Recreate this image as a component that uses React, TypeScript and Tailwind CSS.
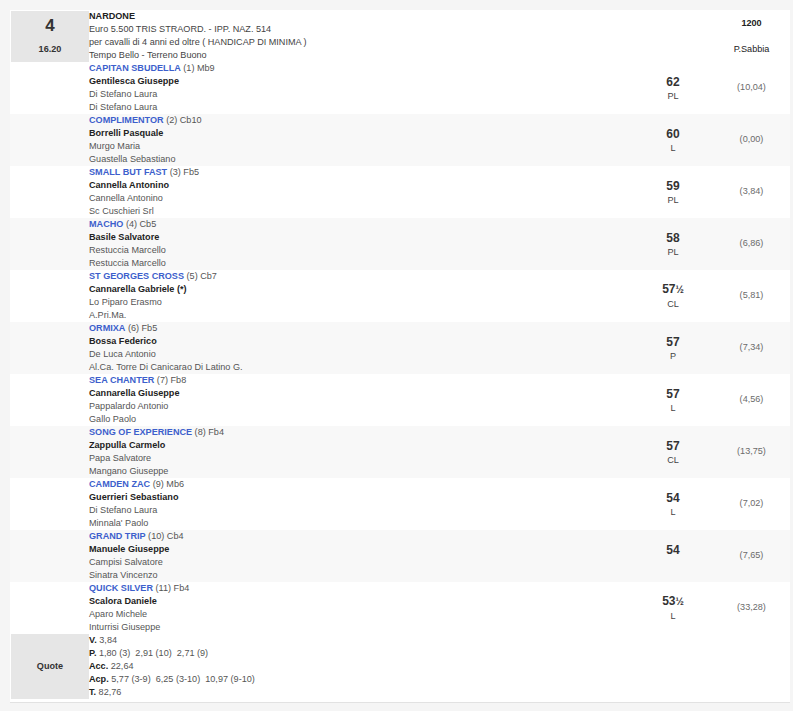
import React from 'react';

type Horse = {
  name: string;
  num: number;
  box: string;
  jockey: string;
  trainer: string;
  owner: string;
  weight: string;
  half?: boolean;
  note: string;
  odds: string;
};

const horses: Horse[] = [
  { name: 'CAPITAN SBUDELLA', num: 1, box: 'Mb9', jockey: 'Gentilesca Giuseppe', trainer: 'Di Stefano Laura', owner: 'Di Stefano Laura', weight: '62', note: 'PL', odds: '(10,04)' },
  { name: 'COMPLIMENTOR', num: 2, box: 'Cb10', jockey: 'Borrelli Pasquale', trainer: 'Murgo Maria', owner: 'Guastella Sebastiano', weight: '60', note: 'L', odds: '(0,00)' },
  { name: 'SMALL BUT FAST', num: 3, box: 'Fb5', jockey: 'Cannella Antonino', trainer: 'Cannella Antonino', owner: 'Sc Cuschieri Srl', weight: '59', note: 'PL', odds: '(3,84)' },
  { name: 'MACHO', num: 4, box: 'Cb5', jockey: 'Basile Salvatore', trainer: 'Restuccia Marcello', owner: 'Restuccia Marcello', weight: '58', note: 'PL', odds: '(6,86)' },
  { name: 'ST GEORGES CROSS', num: 5, box: 'Cb7', jockey: 'Cannarella Gabriele (*)', trainer: 'Lo Piparo Erasmo', owner: 'A.Pri.Ma.', weight: '57', half: true, note: 'CL', odds: '(5,81)' },
  { name: 'ORMIXA', num: 6, box: 'Fb5', jockey: 'Bossa Federico', trainer: 'De Luca Antonio', owner: 'Al.Ca. Torre Di Canicarao Di Latino G.', weight: '57', note: 'P', odds: '(7,34)' },
  { name: 'SEA CHANTER', num: 7, box: 'Fb8', jockey: 'Cannarella Giuseppe', trainer: 'Pappalardo Antonio', owner: 'Gallo Paolo', weight: '57', note: 'L', odds: '(4,56)' },
  { name: 'SONG OF EXPERIENCE', num: 8, box: 'Fb4', jockey: 'Zappulla Carmelo', trainer: 'Papa Salvatore', owner: 'Mangano Giuseppe', weight: '57', note: 'CL', odds: '(13,75)' },
  { name: 'CAMDEN ZAC', num: 9, box: 'Mb6', jockey: 'Guerrieri Sebastiano', trainer: 'Di Stefano Laura', owner: "Minnala' Paolo", weight: '54', note: 'L', odds: '(7,02)' },
  { name: 'GRAND TRIP', num: 10, box: 'Cb4', jockey: 'Manuele Giuseppe', trainer: 'Campisi Salvatore', owner: 'Sinatra Vincenzo', weight: '54', note: '', odds: '(7,65)' },
  { name: 'QUICK SILVER', num: 11, box: 'Fb4', jockey: 'Scalora Daniele', trainer: 'Aparo Michele', owner: 'Inturrisi Giuseppe', weight: '53', half: true, note: 'L', odds: '(33,28)' },
];

function HorseRow({ horse, index }: { horse: Horse; index: number }) {
  const bg = index % 2 === 0 ? 'bg-white' : 'bg-[#f8f8f8]';
  return (
    <div className={`flex h-[52px] ${bg}`}>
      <div className="w-[79px] shrink-0" />
      <div className="flex-1 leading-[13px]">
        <div>
          <span className="font-bold text-[#3d5fcc]">{horse.name}</span>
          <span className="text-[#555]"> ({horse.num}) {horse.box}</span>
        </div>
        <div className="font-bold text-[#222]">{horse.jockey}</div>
        <div className="text-[#555]">{horse.trainer}</div>
        <div className="text-[#555]">{horse.owner}</div>
      </div>
      <div className="flex w-[80px] shrink-0 flex-col items-center justify-center">
        <div className="text-[12px] font-bold leading-[16px] text-[#333]">
          {horse.weight}
          {horse.half && <span className="text-[10px]">½</span>}
        </div>
        <div className="leading-[13px] text-[#444]">{horse.note || '\u00a0'}</div>
      </div>
      <div className="flex w-[77px] shrink-0 items-center justify-center text-[#6b6b6b]">
        {horse.odds}
      </div>
    </div>
  );
}

export default function App(): React.JSX.Element {
  return (
    <div
      className="min-h-[711px] bg-[#f5f5f5] pt-[10px] text-[9.1px] text-[#333]"
      style={{ fontFamily: '"Liberation Sans", Arial, sans-serif' }}
    >
      <div className="mx-[10px] w-[780px] border-b border-[#e2e2e2] bg-white pb-[3px]">
        <div className="flex h-[52px]">
          <div className="ml-px mt-px flex w-[78px] shrink-0 flex-col items-center bg-[#e6e6e6]">
            <div className="mt-[5px] text-[17px] font-bold leading-[20px] text-[#333]">4</div>
            <div className="mt-[7px] font-bold leading-[13px]">16.20</div>
          </div>
          <div className="flex-1 leading-[13px]">
            <div className="font-bold text-[#222]">NARDONE</div>
            <div className="text-[#444]">Euro 5.500 TRIS STRAORD. - IPP. NAZ. 514</div>
            <div className="text-[#444]">per cavalli di 4 anni ed oltre ( HANDICAP DI MINIMA )</div>
            <div className="text-[#444]">Tempo Bello - Terreno Buono</div>
          </div>
          <div className="flex w-[77px] shrink-0 flex-col items-center leading-[13px]">
            <div className="mt-[7px] font-bold text-[#222]">1200</div>
            <div className="mt-[13px] text-[#222]">P.Sabbia</div>
          </div>
        </div>
        {horses.map((h, i) => (
          <HorseRow key={h.num} horse={h} index={i} />
        ))}
        <div className="flex h-[65px]">
          <div className="ml-px flex w-[78px] shrink-0 items-center justify-center bg-[#e6e6e6] font-bold text-[#333]">
            Quote
          </div>
          <div className="flex-1 leading-[13px] text-[#555]">
            <div><b className="text-[#222]">V.</b> 3,84</div>
            <div><b className="text-[#222]">P.</b> 1,80 (3)&nbsp; 2,91 (10)&nbsp; 2,71 (9)</div>
            <div><b className="text-[#222]">Acc.</b> 22,64</div>
            <div><b className="text-[#222]">Acp.</b> 5,77 (3-9)&nbsp; 6,25 (3-10)&nbsp; 10,97 (9-10)</div>
            <div><b className="text-[#222]">T.</b> 82,76</div>
          </div>
        </div>
      </div>
    </div>
  );
}
